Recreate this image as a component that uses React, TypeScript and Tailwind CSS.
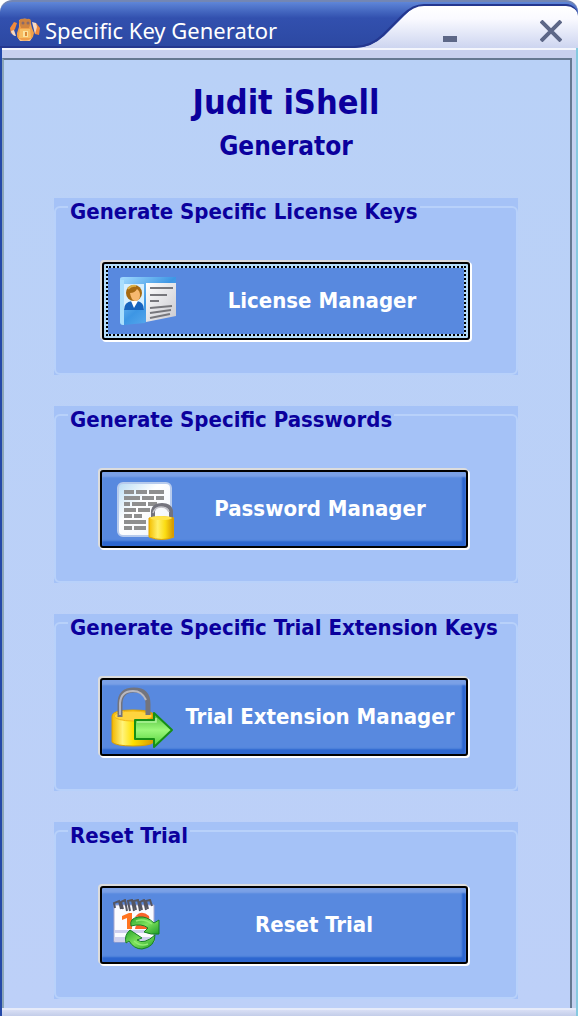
import React from "react";

function BearIcon() {
  return (
    <svg viewBox="0 0 32 26" className="h-[26px] w-8 shrink-0" aria-hidden="true">
      <path d="M5 5 1 11l1 6 4-5 2-6z" fill="#f08a3c" />
      <path d="M2 14q1 5 5 5l-2-6z" fill="#f7d9c2" />
      <path d="m27 6 4 5-1 7-4-1-1-7z" fill="#f08a3c" />
      <path d="m23 5 4 1 1 4-2 7z" fill="#f7d9c2" />
      <path d="M10 3q6-3 11 0l2 8 2 5q-1 8-9 8-9 0-8-8l2-6z" fill="#f0a04a" />
      <path d="M10 5q1-4 4-3l4 0q4-1 4 3l-2 6h-8z" fill="#cf8440" />
      <circle cx="14" cy="6" r="1.5" fill="#8a6a6a" />
      <circle cx="19" cy="6" r="1.5" fill="#8a6a6a" />
      <path d="M11 12h10l1 9H10z" fill="#f7bd62" />
      <path d="M14 14h5v6h-5z" fill="#fbe3a0" />
      <path d="M16 15h2v4h-2z" fill="#dc8a38" />
      <path d="M9 21q7 5 14 0l-2 3H11z" fill="#fbc487" />
    </svg>
  );
}

function CardIcon() {
  return (
    <svg viewBox="0 0 64 64" className="size-16 shrink-0" aria-hidden="true">
      <defs>
        <linearGradient id="card-blue" x1="0" y1="0" x2="1" y2="1">
          <stop offset="0" stopColor="#a4dcff" />
          <stop offset=".5" stopColor="#3d96e4" />
          <stop offset="1" stopColor="#72bcf6" />
        </linearGradient>
        <linearGradient id="card-page" x1="0" y1="0" x2="1" y2="1">
          <stop offset="0" stopColor="#fff" />
          <stop offset="1" stopColor="#c9c9cf" />
        </linearGradient>
      </defs>
      <path d="M8 10q0-2 3-2h53v5l-31 41-22 2q-3 0-3-3z" fill="url(#card-blue)" />
      <path d="M8 11v42q0 3 3 3h1V11z" fill="#a9defd" />
      <path d="M12 15h20v26H12z" fill="#d6efff" />
      <path d="M34 14h30v33l-30 6z" fill="url(#card-page)" />
      <path d="M12 41q0-8 8-9h5q7 1 7 9z" fill="#1763bd" />
      <path d="m19 32 3 7 4-7z" fill="#fff" />
      <circle cx="22" cy="24" r="8" fill="#a66a12" />
      <path d="M18 24q5 0 7-4 3 2 3 6 0 6-5 6-4-1-5-8z" fill="#f7b96f" />
      <path d="M16 20q3-4 8-3" stroke="#deb044" strokeWidth="2" fill="none" />
      <path d="M38 19h23M38 26h17M38 32h9M38 39l22-2M38 44l21-3M38 49l20-4" stroke="#77777c" strokeWidth="1.8" fill="none" />
    </svg>
  );
}

function NoteIcon() {
  return (
    <svg viewBox="0 0 64 64" className="size-16 shrink-0" aria-hidden="true">
      <defs>
        <linearGradient id="note-paper" x1="0" y1="0" x2="1" y2="1">
          <stop offset="0" stopColor="#b8dcf4" />
          <stop offset=".4" stopColor="#fff" />
          <stop offset="1" stopColor="#eef3fb" />
        </linearGradient>
        <linearGradient id="note-gold">
          <stop offset="0" stopColor="#f4be00" />
          <stop offset=".35" stopColor="#fff06a" />
          <stop offset=".65" stopColor="#fbdc12" />
          <stop offset="1" stopColor="#d09000" />
        </linearGradient>
      </defs>
      <rect x="8" y="6" width="53" height="53" rx="5" fill="url(#note-paper)" stroke="#b7cbed" strokeWidth="2" />
      <path
        d="M14 15h10m2 0h11m2 0h15M14 21h16m2 0h12m2 0h8M14 27h6m2 0h14m2 0h9M14 33h12m2 0h12M14 39h8m2 0h8M14 45h22M14 51h8m2 0h12"
        stroke="#8f8f8f"
        strokeWidth="4"
      />
      <path d="M43 43V34q1-6 9-6t9 6v9" stroke="#73737d" strokeWidth="4" fill="none" />
      <path d="M43 36q2-6 8-6 6 0 8 5" stroke="#c2c2c9" strokeWidth="1.5" fill="none" />
      <path d="M39 41q12-3 25 0v19q-12 5-25 0z" fill="url(#note-gold)" stroke="#e2a400" />
      <ellipse cx="51" cy="41" rx="11" ry="2" fill="#ffe44c" />
    </svg>
  );
}

function LockArrowIcon() {
  return (
    <svg viewBox="0 0 64 64" className="size-16 shrink-0" aria-hidden="true">
      <defs>
        <linearGradient id="lock-gold">
          <stop offset="0" stopColor="#f2b600" />
          <stop offset=".25" stopColor="#fff37b" />
          <stop offset=".5" stopColor="#ffe100" />
          <stop offset="1" stopColor="#d99800" />
        </linearGradient>
        <linearGradient id="lock-arrow" x1="0" y1="0" x2="0" y2="1">
          <stop offset="0" stopColor="#48b735" />
          <stop offset=".5" stopColor="#9bf87a" />
          <stop offset="1" stopColor="#50cf3a" />
        </linearGradient>
      </defs>
      <path d="M2 31q0-6 21-6t21 6v26q-4 4-21 4T2 57z" fill="url(#lock-gold)" stroke="#dda000" />
      <ellipse cx="23" cy="31" rx="19" ry="5" fill="#ffd43e" stroke="#f4b814" />
      <path d="M10 32V19Q10 5 24 5t14 14v11" stroke="#73747d" strokeWidth="5" fill="none" />
      <path d="M10 30V18Q11 6 23 6q9 0 13 9" stroke="#b8b8c1" strokeWidth="2" fill="none" />
      <path d="M25 35h19V28l18 17-18 17v-8H25z" fill="url(#lock-arrow)" stroke="#168f16" strokeWidth="2" strokeLinejoin="round" />
      <path d="M27 37h19v-4" stroke="#b0f49a" strokeWidth="1.5" fill="none" />
    </svg>
  );
}

function CalendarIcon() {
  return (
    <svg viewBox="0 0 52 52" className="size-[52px] shrink-0" aria-hidden="true">
      <defs>
        <linearGradient id="cal-green" x1="0" y1="0" x2="1" y2="1">
          <stop offset="0" stopColor="#28a52c" />
          <stop offset=".5" stopColor="#7fe35c" />
          <stop offset="1" stopColor="#1c9c29" />
        </linearGradient>
      </defs>
      <path d="M4 6h40v37H4z" fill="#fbfbff" stroke="#a7a7cf" />
      <path d="M5 31h38v3H5zM5 38h38v4H5z" fill="#cfd0ee" />
      <path d="M12 17l7-3h3v16h-5V19l-5 2z" fill="#ff7320" />
      <path d="M25 18q6-8 14-1 2 5-5 9h7v4H25q0-4 8-10-3-3-8-2z" fill="#fa632a" />
      <path
        d="m5 9-1-5 5-2 2 8m2 0-2-7 4-2 2 11m3 0-2-10 4-1 2 11m2-1-2-9 4-1 2 11m2-1-2-8 4-2 2 10m2-1-2-8 4-1 2 6"
        stroke="#555560"
        strokeWidth="2"
        fill="none"
      />
      <path d="M21 27q-2-8 8-9 8-1 15 6l5-3v14q-8 1-15-2l4-4q-6-5-17-2z" fill="url(#cal-green)" stroke="#168024" />
      <path d="m20 31 12 8-5 2q7 5 18-5 0 12-13 14-8 0-13-8l-3 2q-2-8 4-13z" fill="url(#cal-green)" stroke="#168024" />
      <path d="M26 22q8-3 16 3M24 42q6 6 14 3" stroke="#91ec73" strokeWidth="1.5" fill="none" />
    </svg>
  );
}

type Section = { legend: string; action: string; icon: React.ReactNode; focused?: boolean };

const sections: Section[] = [
  { legend: "Generate Specific License Keys", action: "License Manager", icon: <CardIcon />, focused: true },
  { legend: "Generate Specific Passwords", action: "Password Manager", icon: <NoteIcon /> },
  { legend: "Generate Specific Trial Extension Keys", action: "Trial Extension Manager", icon: <LockArrowIcon /> },
  { legend: "Reset Trial", action: "Reset Trial", icon: <CalendarIcon /> },
];

function TitleBar() {
  return (
    <header className="flex h-12 overflow-hidden rounded-t-xl border-t-2 border-[#7386b4] bg-linear-to-b from-[#5f86d8] via-[#3250ae] via-35% to-[#2c48a2]">
      <div className="flex min-w-0 flex-1 items-center border-b-2 border-[#24378f] pt-3 pl-[9px]">
        <BearIcon />
        <h1 className="ml-1 whitespace-nowrap font-['Noto_Sans','Open_Sans',sans-serif] text-[22px] leading-8 text-white">
          Specific Key Generator
        </h1>
      </div>
      <svg viewBox="0 0 80 46" className="h-[46px] w-20 shrink-0" aria-hidden="true">
        <defs>
          <linearGradient id="tab-face" gradientUnits="userSpaceOnUse" x1="0" y1="4" x2="0" y2="46">
            <stop offset="0" stopColor="#fff" />
            <stop offset=".3" stopColor="#fafaff" />
            <stop offset="1" stopColor="#cdd5f0" />
          </linearGradient>
        </defs>
        <path d="M0 46q17 0 30-12L50 14Q60 3 70 3h10v43z" fill="url(#tab-face)" />
        <path d="M0 45q17 0 29-12l20-20Q59 3 70 3h10" stroke="#24378f" strokeWidth="2" fill="none" />
      </svg>
      <div className="flex w-36 shrink-0 pt-[2px]">
        <div className="flex flex-1 justify-between rounded-tr-xl border-t-2 border-[#24378f] bg-linear-to-b from-white via-[#fafaff] via-30% to-[#cdd5f0] pr-[11px]">
          <button type="button" aria-label="Minimize" className="flex h-full w-8 items-start justify-center pt-[30px]">
            <span className="h-[6px] w-[14px] bg-[#5d6787]" />
          </button>
          <button type="button" aria-label="Close" className="flex h-full w-8 items-start justify-center pt-[14px]">
            <svg viewBox="0 0 22 22" className="size-[22px] shrink-0" aria-hidden="true">
              <path d="m1 1 20 20M21 1 1 21" stroke="#5d6787" strokeWidth="4" />
            </svg>
          </button>
        </div>
      </div>
    </header>
  );
}

const buttonBase =
  "flex h-[78px] w-full items-center rounded-[3px] border-2 border-black bg-[#5889df] pl-2 text-[22px] leading-7 text-white";
const buttonFocused =
  "outline-2 -outline-offset-6 outline-dotted outline-black shadow-[inset_0_0_0_4px_#b4dcf8,-1px_-1px_0_1px_#dcdcdc,1px_1px_0_1px_#ffffff]";
const buttonPlain =
  "shadow-[inset_0_5px_2px_0_#7ba1e6,inset_-4px_-5px_2px_0_#2c66cf,-1px_-1px_0_1px_#dcdcdc,1px_1px_0_1px_#ffffff]";

function GroupBox({ legend, action, icon, focused }: Section) {
  return (
    <section className="bg-[#a5c2f7] pt-2" aria-label={legend}>
      <div className="h-[169px] rounded-md border-2 border-[#b8d1fa]">
        <h3 className="-mt-2 flex h-6 text-[22px] leading-6">
          <span className="ml-3 whitespace-nowrap bg-[#a5c2f7] px-[2px]">{legend}</span>
        </h3>
        <div className={focused ? "px-[46px] pt-[38px]" : "pt-[38px] pr-12 pl-11"}>
          <button type="button" className={`${buttonBase} ${focused ? buttonFocused : buttonPlain}`}>
            {icon}
            <span className="flex-1 whitespace-nowrap text-center">{action}</span>
          </button>
        </div>
      </div>
    </section>
  );
}

export default function App() {
  return (
    <div>
      <TitleBar />
      <div className="border-r-2 border-l-2 border-r-[#85c9e0] border-l-[#2449a8] bg-[#c3d1ef]">
        <div className="h-[10px] border-t-2 border-[#f4f6fd] bg-[#c8d0ee]" />
        <main className="mr-1 border-2 border-b-0 border-[#657891] border-l-[#8aa5b8] bg-linear-to-b from-[#b9d1f7] to-[#bdd0f8] pr-[52px] pl-[50px] pt-5 font-['DejaVu_Sans_Condensed','DejaVu_Sans',sans-serif] font-bold text-[#0b009d]">
          <div className="text-center">
            <p className="text-[34px] leading-11">Judit iShell</p>
            <p className="text-[26px] leading-11">Generator</p>
          </div>
          <div className="mt-[30px] flex flex-col gap-[31px] pb-[9px]">
            {sections.map((section) => (
              <GroupBox key={section.legend} {...section} />
            ))}
          </div>
        </main>
        <div className="h-2 border-t-2 border-[#e6ebfa] bg-linear-to-b from-[#d9dff5] to-[#c3cde9]" />
      </div>
    </div>
  );
}
